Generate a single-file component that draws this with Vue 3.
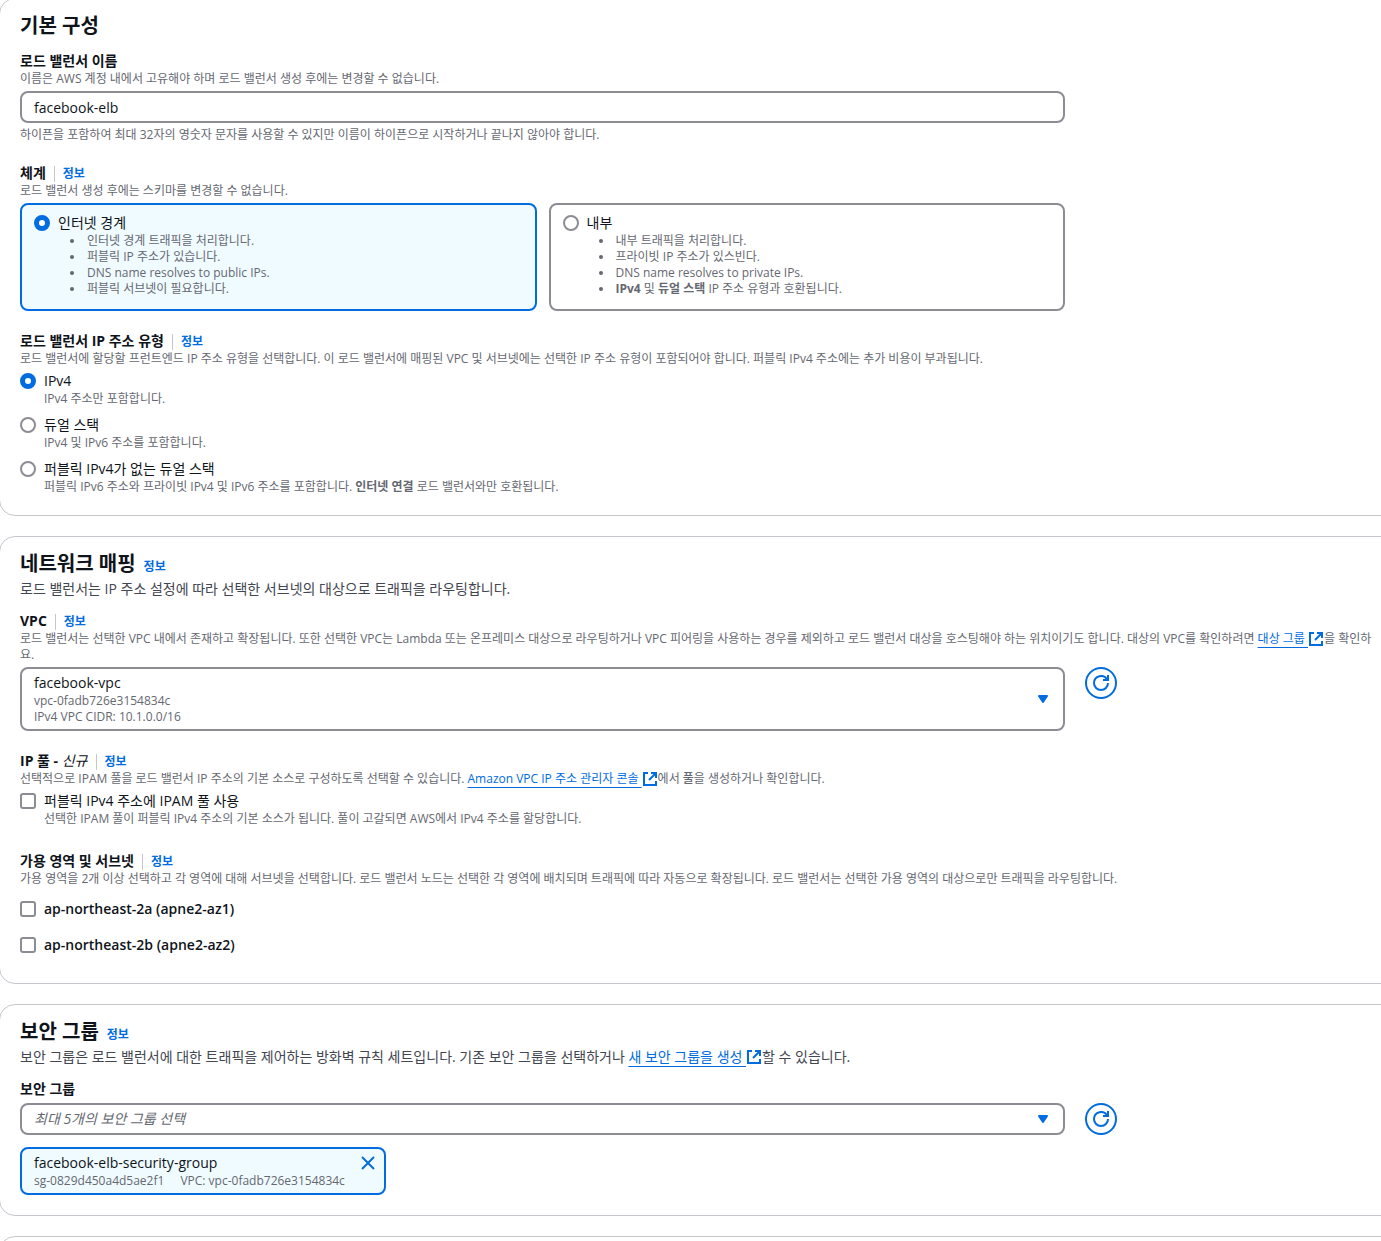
<script setup>
import { ref, h } from 'vue'

const name = ref('facebook-elb')
const scheme = ref('internet')
const ipType = ref('ipv4')
const useIpam = ref(false)
const zones = ref([
  { id: 'az1', label: 'ap-northeast-2a (apne2-az1)', on: false },
  { id: 'az2', label: 'ap-northeast-2b (apne2-az2)', on: false },
])
const group = ref('')

const icon = (paths, extra = {}) => () =>
  h('svg', { viewBox: '0 0 16 16', width: 16, height: 16, fill: 'none', stroke: 'currentColor', 'stroke-width': 2, 'aria-hidden': 'true', ...extra },
    paths.map((d) => h('path', { d })))

const IconExternal = icon(['M9 2h5v5', 'M7 9l7-7', 'M14 10v4H2V2h4'])
const IconRefresh = icon(['M10 5h5V0', 'M15 8a7 7 0 0 1-14 0a7 7 0 0 1 13.3-3'])
const IconClose = icon(['M2 2l12 12', 'M14 2L2 14'])
const IconCaret = icon(['M4 5h8l-4 6z'], { fill: 'currentColor', 'stroke-linejoin': 'round' })
</script>

<template>
  <main class="page">
    <section class="card">
      <header class="card-head">
        <h2>기본 구성</h2>
      </header>
      <div class="fields">
        <div class="field">
          <label class="label" for="lb-name">로드 밸런서 이름</label>
          <p class="hint">이름은 AWS 계정 내에서 고유해야 하며 로드 밸런서 생성 후에는 변경할 수 없습니다.</p>
          <div class="row">
            <input id="lb-name" v-model="name" class="control" type="text" />
          </div>
          <p class="hint below">하이픈을 포함하여 최대 32자의 영숫자 문자를 사용할 수 있지만 이름이 하이픈으로 시작하거나 끝나지 않아야 합니다.</p>
        </div>

        <div class="field" role="radiogroup" aria-labelledby="scheme-label">
          <div class="label-line">
            <span id="scheme-label" class="label">체계</span>
            <a class="info" href="#">정보</a>
          </div>
          <p class="hint">로드 밸런서 생성 후에는 스키마를 변경할 수 없습니다.</p>
          <div class="row">
            <div class="tiles">
              <label class="tile" :class="{ selected: scheme === 'internet' }">
                <input v-model="scheme" type="radio" name="scheme" value="internet" />
                <span class="choice-body">
                  <span class="choice-label">인터넷 경계</span>
                  <ul class="hint">
                    <li>인터넷 경계 트래픽을 처리합니다.</li>
                    <li>퍼블릭 IP 주소가 있습니다.</li>
                    <li>DNS name resolves to public IPs.</li>
                    <li>퍼블릭 서브넷이 필요합니다.</li>
                  </ul>
                </span>
              </label>
              <label class="tile" :class="{ selected: scheme === 'internal' }">
                <input v-model="scheme" type="radio" name="scheme" value="internal" />
                <span class="choice-body">
                  <span class="choice-label">내부</span>
                  <ul class="hint">
                    <li>내부 트래픽을 처리합니다.</li>
                    <li>프라이빗 IP 주소가 있스빈다.</li>
                    <li>DNS name resolves to private IPs.</li>
                    <li><b>IPv4</b> 및 <b>듀얼 스택</b> IP 주소 유형과 호환됩니다.</li>
                  </ul>
                </span>
              </label>
            </div>
          </div>
        </div>

        <div class="field" role="radiogroup" aria-labelledby="ip-label">
          <div class="label-line">
            <span id="ip-label" class="label">로드 밸런서 IP 주소 유형</span>
            <a class="info" href="#">정보</a>
          </div>
          <p class="hint">로드 밸런서에 할당할 프런트엔드 IP 주소 유형을 선택합니다. 이 로드 밸런서에 매핑된 VPC 및 서브넷에는 선택한 IP 주소 유형이 포함되어야 합니다. 퍼블릭 IPv4 주소에는 추가 비용이 부과됩니다.</p>
          <div class="choices">
            <label class="choice">
              <input v-model="ipType" type="radio" name="ip-type" value="ipv4" />
              <span class="choice-body">
                <span class="choice-label">IPv4</span>
                <span class="hint">IPv4 주소만 포함합니다.</span>
              </span>
            </label>
            <label class="choice">
              <input v-model="ipType" type="radio" name="ip-type" value="dual" />
              <span class="choice-body">
                <span class="choice-label">듀얼 스택</span>
                <span class="hint">IPv4 및 IPv6 주소를 포함합니다.</span>
              </span>
            </label>
            <label class="choice">
              <input v-model="ipType" type="radio" name="ip-type" value="dual-private" />
              <span class="choice-body">
                <span class="choice-label">퍼블릭 IPv4가 없는 듀얼 스택</span>
                <span class="hint">퍼블릭 IPv6 주소와 프라이빗 IPv4 및 IPv6 주소를 포함합니다. <b>인터넷 연결</b> 로드 밸런서와만 호환됩니다.</span>
              </span>
            </label>
          </div>
        </div>
      </div>
    </section>

    <section class="card">
      <header class="card-head">
        <div class="title-line">
          <h2>네트워크 매핑</h2>
          <a class="info" href="#">정보</a>
        </div>
        <p class="lead">로드 밸런서는 IP 주소 설정에 따라 선택한 서브넷의 대상으로 트래픽을 라우팅합니다.</p>
      </header>
      <div class="fields">
        <div class="field">
          <div class="label-line">
            <span id="vpc-label" class="label">VPC</span>
            <a class="info" href="#">정보</a>
          </div>
          <p class="hint">로드 밸런서는 선택한 VPC 내에서 존재하고 확장됩니다. 또한 선택한 VPC는 Lambda 또는 온프레미스 대상으로 라우팅하거나 VPC 피어링을 사용하는 경우를 제외하고 로드 밸런서 대상을 호스팅해야 하는 위치이기도 합니다. 대상의 VPC를 확인하려면 <a class="link" href="#"><span>대상 그룹&nbsp;</span><IconExternal /></a>을 확인하<br />요.</p>
          <div class="row">
            <button id="vpc" type="button" class="control rich" aria-haspopup="listbox" aria-labelledby="vpc-label vpc">
              <span class="rich-text">
                <span class="choice-label">facebook-vpc</span>
                <span class="hint">vpc-0fadb726e3154834c</span>
                <span class="hint">IPv4 VPC CIDR: 10.1.0.0/16</span>
              </span>
              <IconCaret class="caret" />
            </button>
            <button type="button" class="refresh" aria-label="VPC 새로 고침"><IconRefresh /></button>
          </div>
        </div>

        <div class="field">
          <div class="label-line">
            <span class="label">IP 풀 - <i>신규</i></span>
            <a class="info" href="#">정보</a>
          </div>
          <p class="hint">선택적으로 IPAM 풀을 로드 밸런서 IP 주소의 기본 소스로 구성하도록 선택할 수 있습니다. <a class="link" href="#"><span>Amazon VPC IP 주소 관리자 콘솔&nbsp;</span><IconExternal /></a>에서 <b class="medium">풀</b>을 생성하거나 확인합니다.</p>
          <div class="choices spaced">
            <label class="choice">
              <input v-model="useIpam" type="checkbox" />
              <span class="choice-body">
                <span class="choice-label">퍼블릭 IPv4 주소에 IPAM 풀 사용</span>
                <span class="hint">선택한 IPAM 풀이 퍼블릭 IPv4 주소의 기본 소스가 됩니다. 풀이 고갈되면 AWS에서 IPv4 주소를 할당합니다.</span>
              </span>
            </label>
          </div>
        </div>

        <div class="field">
          <div class="label-line">
            <span class="label">가용 영역 및 서브넷</span>
            <a class="info" href="#">정보</a>
          </div>
          <p class="hint">가용 영역을 2개 이상 선택하고 각 영역에 대해 서브넷을 선택합니다. 로드 밸런서 노드는 선택한 각 영역에 배치되며 트래픽에 따라 자동으로 확장됩니다. 로드 밸런서는 선택한 가용 영역의 대상으로만 트래픽을 라우팅합니다.</p>
          <div class="zones">
            <label v-for="z in zones" :key="z.id" class="choice zone">
              <input v-model="z.on" type="checkbox" />
              <span class="choice-body"><b class="choice-label">{{ z.label }}</b></span>
            </label>
          </div>
        </div>
      </div>
    </section>

    <section class="card">
      <header class="card-head">
        <div class="title-line">
          <h2>보안 그룹</h2>
          <a class="info" href="#">정보</a>
        </div>
        <p class="lead">보안 그룹은 로드 밸런서에 대한 트래픽을 제어하는 방화벽 규칙 세트입니다. 기존 보안 그룹을 선택하거나 <a class="link" href="#"><span>새 보안 그룹을 생성&nbsp;</span><IconExternal /></a>할 수 있습니다.</p>
      </header>
      <div class="fields">
        <div class="field">
          <label class="label" for="sg">보안 그룹</label>
          <div class="row">
            <div class="select-wrap">
              <select id="sg" v-model="group" class="control placeholder">
                <option value="">최대 5개의 보안 그룹 선택</option>
              </select>
              <IconCaret class="caret over" />
            </div>
            <button type="button" class="refresh" aria-label="보안 그룹 새로 고침"><IconRefresh /></button>
          </div>
          <div class="token">
            <div>
              <div class="choice-label">facebook-elb-security-group</div>
              <div class="hint tags"><span>sg-0829d450a4d5ae2f1</span><span>VPC: vpc-0fadb726e3154834c</span></div>
            </div>
            <button type="button" class="dismiss" aria-label="facebook-elb-security-group 제거"><IconClose /></button>
          </div>
        </div>
      </div>
    </section>

    <section class="card next"></section>
  </main>
</template>

<style>
html,
body {
  background: #fff;
}
</style>

<style scoped>
.page {
  --blue: #006ce0;
  --ink: #0f141a;
  --muted: #656871;
  --line: #c6c6cd;
  --control: #8c8c94;
  display: flex;
  flex-direction: column;
  gap: 20px;
  height: 100vh;
  margin: 0;
  overflow: hidden;
  color: var(--ink);
  font: 14px/20px "Open Sans", "Noto Sans CJK KR", sans-serif;
}

* {
  box-sizing: border-box;
}

h2,
p,
ul {
  margin: 0;
}

.card {
  flex: none;
  margin: 0 -60px 0 -1px;
  padding: 14px 20px 20px;
  border: 1px solid var(--line);
  border-radius: 16px;
  background: #fff;
}

.card:first-child {
  margin-top: -2px;
}

.next {
  height: 60px;
}

.card-head {
  margin-bottom: 12px;
}

h2 {
  font-size: 20px;
  line-height: 26px;
  font-weight: 700;
}

.title-line {
  display: flex;
  align-items: baseline;
  gap: 8px;
  height: 26px;
}

.lead {
  margin-top: 2px;
  color: #424650;
}

.fields {
  display: flex;
  flex-direction: column;
  gap: 20px;
}

.label {
  display: block;
  font-weight: 700;
}

.label i {
  font-weight: 400;
}

.label-line {
  display: flex;
  align-items: baseline;
  gap: 8px;
  height: 20px;
}

.info {
  color: var(--blue);
  font-size: 12px;
  line-height: 16px;
  font-weight: 700;
  text-decoration: none;
}

.label-line .info {
  padding-left: 8px;
  border-left: 1px solid var(--line);
}

.hint {
  display: block;
  color: var(--muted);
  font-size: 12px;
  line-height: 16px;
}

.below {
  margin-top: 4px;
}

.link {
  color: var(--blue);
  text-decoration: none;
}

.link span {
  text-decoration: underline;
  text-decoration-thickness: 1px;
  text-underline-offset: 4px;
}

.link svg {
  height: 16px;
  vertical-align: top;
}

.lead .link svg {
  margin-top: 2px;
}

.row {
  display: grid;
  grid-template-columns: repeat(12, 1fr);
  column-gap: 20px;
  margin-top: 4px;
}

.row > :first-child {
  grid-column: span 9;
}

.control {
  width: 100%;
  height: 32px;
  padding: 0 12px;
  border: 2px solid var(--control);
  border-radius: 8px;
  background: #fff;
  color: var(--ink);
  font: inherit;
  appearance: none;
}

.rich {
  display: flex;
  align-items: center;
  justify-content: space-between;
  height: auto;
  padding: 4px 12px;
  text-align: left;
}

.caret {
  color: var(--blue);
}

.select-wrap {
  position: relative;
}

.over {
  position: absolute;
  top: 8px;
  right: 14px;
  pointer-events: none;
}

.placeholder {
  display: block;
  color: var(--muted);
  font-style: italic;
}

.refresh {
  display: grid;
  place-items: center;
  width: 32px;
  height: 32px;
  padding: 0;
  border: 2px solid var(--blue);
  border-radius: 50%;
  background: #fff;
  color: var(--blue);
}

.tiles {
  display: grid;
  grid-template-columns: 1fr 1fr;
  gap: 12px;
}

.tile {
  display: flex;
  gap: 8px;
  padding: 8px 12px 12px;
  border: 2px solid var(--control);
  border-radius: 8px;
}

.selected {
  border-color: var(--blue);
  background: #f0fbff;
}

.tile ul {
  padding-left: 27px;
}

.tile li {
  padding-left: 2px;
}

.choices {
  display: flex;
  flex-direction: column;
  gap: 8px;
  margin-top: 4px;
}

.spaced {
  margin-bottom: 4px;
}

.choice {
  display: flex;
  gap: 8px;
}

.choice-label {
  display: block;
  line-height: 20px;
}

.zones {
  margin-top: 4px;
}

.zone {
  padding: 8px 0;
}

.zone b {
  font-weight: 600;
}

input[type='radio'],
input[type='checkbox'] {
  flex: none;
  width: 16px;
  height: 16px;
  margin: 2px 0 0;
  border: 2px solid var(--control);
  border-radius: 50%;
  background: #fff;
  appearance: none;
}

input[type='checkbox'] {
  border-radius: 3px;
}

input[type='radio']:checked {
  border: 5px solid var(--blue);
}

input[type='checkbox']:checked {
  border-color: var(--blue);
  background: var(--blue);
}

.medium {
  font-weight: 500;
}

.token {
  display: flex;
  align-items: flex-start;
  justify-content: space-between;
  width: 366px;
  max-width: 100%;
  margin-top: 12px;
  padding: 4px 8px 4px 12px;
  border: 2px solid var(--blue);
  border-radius: 8px;
  background: #f0fbff;
}

.tags {
  display: flex;
  gap: 16px;
}

.dismiss {
  display: grid;
  padding: 2px 0;
  border: 0;
  background: none;
  color: var(--blue);
}
</style>
